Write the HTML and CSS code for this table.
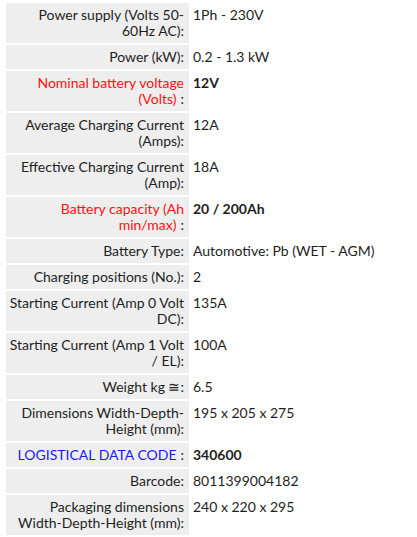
FILE: index.html
```html
<!DOCTYPE html>
<html>
<head>
<meta charset="utf-8">
<link rel="stylesheet" href="styles.css">
</head>
<body>
<table class="specs">
  <tr><th>Power supply (Volts 50-60Hz AC):</th><td>1Ph - 230V</td></tr>
  <tr><th>Power (kW):</th><td>0.2 - 1.3 kW</td></tr>
  <tr><th class="red">Nominal battery voltage (Volts)</th><td class="strong">12V</td></tr>
  <tr><th>Average Charging Current (Amps):</th><td>12A</td></tr>
  <tr><th>Effective Charging Current (Amp):</th><td>18A</td></tr>
  <tr><th class="red">Battery capacity (Ah min/max)</th><td class="strong">20 / 200Ah</td></tr>
  <tr><th>Battery Type:</th><td>Automotive: Pb (WET - AGM)</td></tr>
  <tr><th>Charging positions (No.):</th><td>2</td></tr>
  <tr><th>Starting Current (Amp 0 Volt DC):</th><td>135A</td></tr>
  <tr><th>Starting Current (Amp 1 Volt / EL):</th><td>100A</td></tr>
  <tr><th>Weight kg ≅:</th><td>6.5</td></tr>
  <tr><th>Dimensions Width-Depth-Height (mm):</th><td>195 x 205 x 275</td></tr>
  <tr><th class="blue">LOGISTICAL DATA CODE</th><td class="strong">340600</td></tr>
  <tr><th>Barcode:</th><td>8011399004182</td></tr>
  <tr><th>Packaging dimensions Width-Depth-Height (mm):</th><td>240 x 220 x 295</td></tr>
</table>
</body>
</html>
```

FILE: styles.css
```css
html, body {
  margin: 0;
  padding: 0;
  background: #fff;
}
body {
  padding: 1px 0 0 4px;
  font-family: Lato, "Noto Sans", sans-serif;
  font-size: 14px;
  color: #1e1e1e;
}
.specs {
  border-collapse: separate;
  border-spacing: 2px;
}
.specs th {
  width: 178px;
  background: #eeeeee;
  font-weight: normal;
  text-align: right;
  vertical-align: top;
  line-height: 16px;
  padding: 4px 5px 4px 0;
}
.specs td {
  vertical-align: top;
  line-height: 16px;
  padding: 4px 2px;
}
.specs th.red { color: #ff0f0f; }
.specs th.blue { color: #1a1af5; }
.specs th.red::after,
.specs th.blue::after {
  content: ":";
  color: #1e1e1e;
  padding-left: 4px;
}
.specs td.strong { font-weight: bold; }
```
